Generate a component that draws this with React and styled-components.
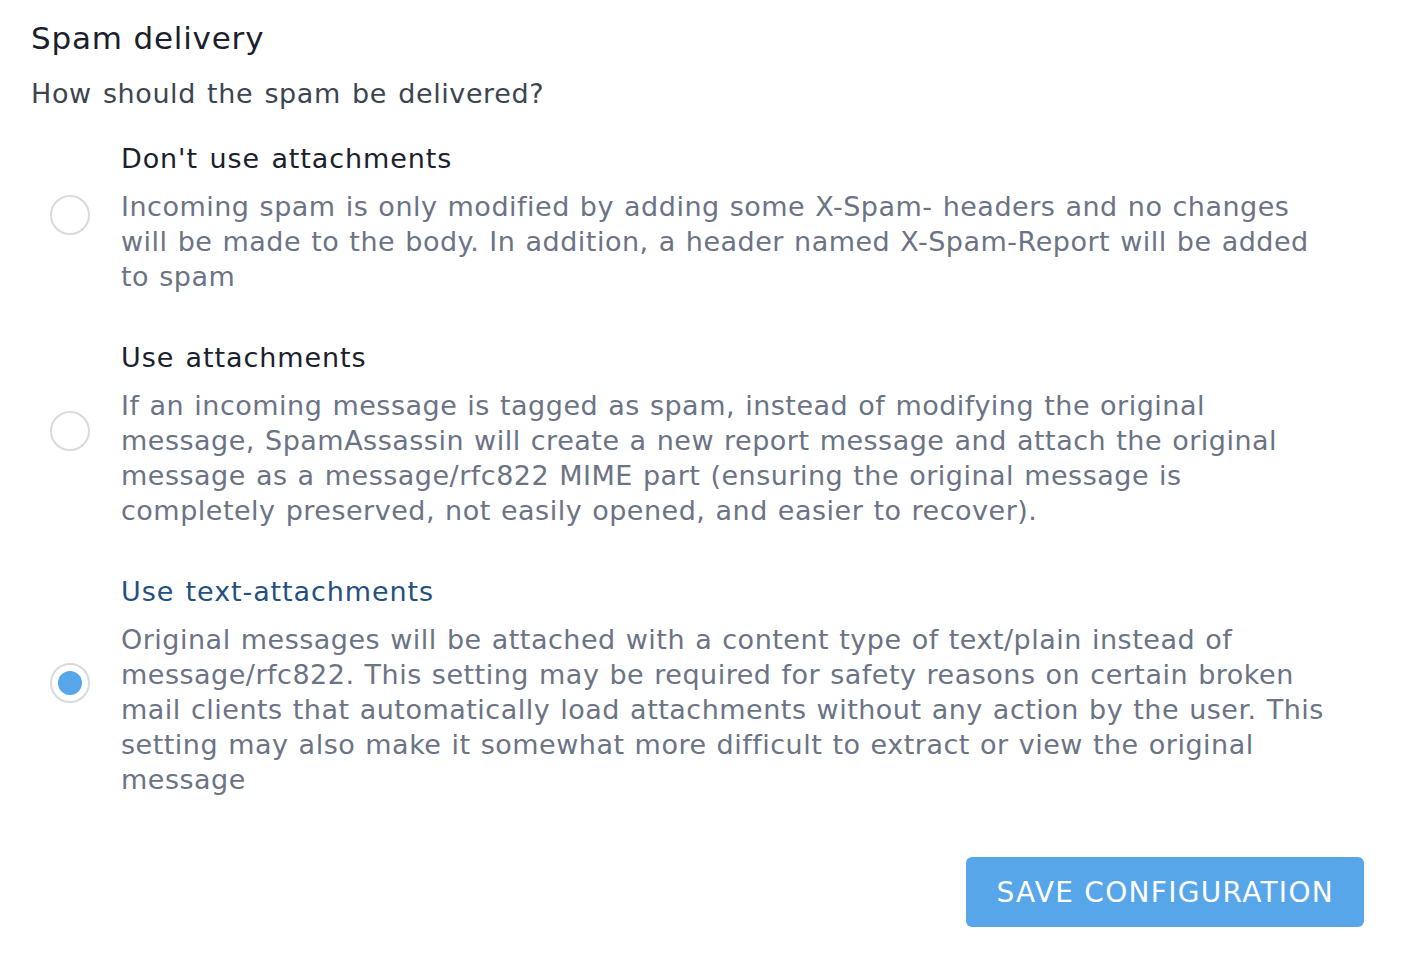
import React, { useState } from 'react';
import styled, { createGlobalStyle } from 'styled-components';

const options = [
  {
    id: 'none',
    title: "Don't use attachments",
    text: 'Incoming spam is only modified by adding some X-Spam- headers and no changes will be made to the body. In addition, a header named X-Spam-Report will be added to spam',
  },
  {
    id: 'attach',
    title: 'Use attachments',
    text: 'If an incoming message is tagged as spam, instead of modifying the original message, SpamAssassin will create a new report message and attach the original message as a message/rfc822 MIME part (ensuring the original message is completely preserved, not easily opened, and easier to recover).',
  },
  {
    id: 'text',
    title: 'Use text-attachments',
    text: 'Original messages will be attached with a content type of text/plain instead of message/rfc822. This setting may be required for safety reasons on certain broken mail clients that automatically load attachments without any action by the user. This setting may also make it somewhat more difficult to extract or view the original message',
  },
];

function App() {
  const [selected, setSelected] = useState('text');
  return (
    <>
      <GlobalStyle />
      <Page>
        <Heading>Spam delivery</Heading>
        <Question>How should the spam be delivered?</Question>
        <OptionList>
          {options.map((o) => (
            <Option key={o.id} onClick={() => setSelected(o.id)}>
              <RadioCell>
                <Radio checked={selected === o.id} />
              </RadioCell>
              <OptionBody>
                <OptionTitle active={selected === o.id}>{o.title}</OptionTitle>
                <OptionText>{o.text}</OptionText>
              </OptionBody>
            </Option>
          ))}
        </OptionList>
        <Footer>
          <SaveButton>Save configuration</SaveButton>
        </Footer>
      </Page>
    </>
  );
}

// Styles

const GlobalStyle = createGlobalStyle`
  body {
    margin: 0;
    background: #fff;
    font-family: "DejaVu Sans", "Open Sans", sans-serif;
  }
`;

const Page = styled.div`
  width: 1333px;
  padding: 16px 0 0 31px;
`;

const Heading = styled.h2`
  margin: 0;
  font-size: 31px;
  font-weight: 500;
  line-height: 44px;
  letter-spacing: 0.8px;
  color: #1a202c;
`;

const Question = styled.p`
  margin: 16px 0 0;
  font-size: 27px;
  line-height: 35px;
  letter-spacing: 0.6px;
  word-spacing: 2px;
  color: #3d4451;
`;

const OptionList = styled.div`
  display: flex;
  flex-direction: column;
  gap: 46px;
  margin-top: 30px;
`;

const Option = styled.label`
  display: flex;
  align-items: center;
  cursor: pointer;
`;

const RadioCell = styled.div`
  width: 90px;
  flex-shrink: 0;
  display: flex;
  align-items: center;
  margin-top: -6px;
`;

const Radio = styled.span`
  margin-left: 19px;
  width: 40px;
  height: 40px;
  box-sizing: border-box;
  border-radius: 50%;
  border: 2px solid #d7dae0;
  display: flex;
  align-items: center;
  justify-content: center;

  &::after {
    content: '';
    width: 24px;
    height: 24px;
    border-radius: 50%;
    background: #58a6ea;
    display: ${(p) => (p.checked ? 'block' : 'none')};
  }
`;

const OptionBody = styled.div`
  flex: 1;
  max-width: 1212px;
  display: flex;
  flex-direction: column;
  gap: 13px;
`;

const OptionTitle = styled.div`
  font-size: 27px;
  font-weight: 500;
  line-height: 35px;
  letter-spacing: 0.9px;
  word-spacing: 2px;
  color: ${(p) => (p.active ? '#24507f' : '#1a202c')};
`;

const OptionText = styled.div`
  font-size: 27px;
  line-height: 35px;
  letter-spacing: 0.5px;
  word-spacing: 1px;
  color: #6b7385;
`;

const Footer = styled.div`
  display: flex;
  justify-content: flex-end;
  margin-top: 60px;
`;

const SaveButton = styled.button`
  height: 70px;
  padding: 0 30px;
  border: none;
  border-radius: 6px;
  background: #58a6ea;
  color: #fff;
  font-family: inherit;
  font-size: 28px;
  letter-spacing: 1.3px;
  text-transform: uppercase;
  cursor: pointer;
`;

export default App;
